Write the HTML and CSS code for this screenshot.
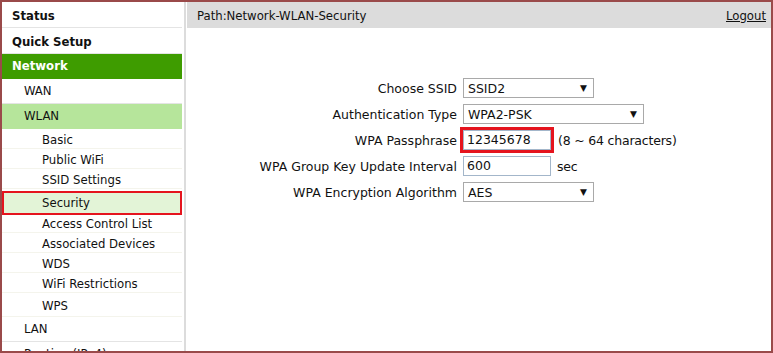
FILE: index.html
```html
<!DOCTYPE html>
<html>
<head>
<meta charset="utf-8">
<link rel="stylesheet" href="styles.css">
</head>
<body>
<div class="frame">
  <nav class="sidebar">
    <div class="item top first">Status</div>
    <div class="item top second">Quick Setup</div>
    <div class="item top active">Network</div>
    <div class="item mid">WAN</div>
    <div class="item mid open">WLAN</div>
    <div class="sub">Basic</div>
    <div class="sub">Public WiFi</div>
    <div class="sub">SSID Settings</div>
    <div class="sub current">Security</div>
    <div class="sub">Access Control List</div>
    <div class="sub">Associated Devices</div>
    <div class="sub">WDS</div>
    <div class="sub">WiFi Restrictions</div>
    <div class="sub last">WPS</div>
    <div class="item mid">LAN</div>
    <div class="item mid">Routing (IPv4)</div>
  </nav>
  <main class="main">
    <header class="pathbar">
      <span class="path">Path:Network-WLAN-Security</span>
      <a class="logout" href="#">Logout</a>
    </header>
    <form class="form">
      <label class="lbl">Choose SSID</label>
      <div class="field"><div class="select w130"><span>SSID2</span><span class="arrow">▼</span></div></div>
      <label class="lbl">Authentication Type</label>
      <div class="field"><div class="select w180"><span>WPA2-PSK</span><span class="arrow">▼</span></div></div>
      <label class="lbl">WPA Passphrase</label>
      <div class="field"><div class="hl"><div class="input">12345678</div></div><span class="hint">(8 ~ 64 characters)</span></div>
      <label class="lbl">WPA Group Key Update Interval</label>
      <div class="field"><div class="input">600</div><span class="hint unit">sec</span></div>
      <label class="lbl">WPA Encryption Algorithm</label>
      <div class="field"><div class="select w130"><span>AES</span><span class="arrow">▼</span></div></div>
    </form>
  </main>
</div>
</body>
</html>
```
FILE: styles.css
```css
* { box-sizing: border-box; }
html, body { margin: 0; padding: 0; background: #fff; }
body {
  font-family: "DejaVu Sans Condensed", "DejaVu Sans", sans-serif;
  font-size: 13px;
  color: #111;
}
.frame {
  width: 773px;
  height: 353px;
  border: 2px solid #9a4a4a;
  display: flex;
  overflow: hidden;
}
.sidebar {
  width: 184px;
  flex: none;
  border-right: 2px solid #dcdcdc;
  background: #fff;
  display: flex;
  flex-direction: column;
}
.item {
  height: 25px;
  line-height: 24px;
  border-bottom: 1px solid #e4e4e4;
  flex: none;
  margin-right: 2px;
}
.item.top { font-weight: bold; padding-left: 10px; color: #111; }
.item.first, .item.second { height: 26px; padding-top: 2px; }
.item.active { background: #3e9c00; color: #fff; border-bottom-color: #3e9c00; }
.item.mid { padding-left: 22px; }
.item.open { background: #b6e59b; border-bottom-color: #b6e59b; }
.sub {
  height: 20px;
  line-height: 21px;
  padding-left: 40px;
  border-bottom: 1px solid #f4f4ec;
  flex: none;
  margin-right: 2px;
}
.sub.current {
  height: 24px;
  line-height: 20px;
  padding-left: 38px;
  background: #e3f4d7;
  border: 2px solid #e5141e;
  margin-top: 2px;
  margin-bottom: -2px;
  position: relative;
  z-index: 1;
}
.sub.last { height: 24px; line-height: 25px; }
.main {
  flex: 1;
  display: flex;
  flex-direction: column;
  margin-left: 1px;
}
.pathbar {
  height: 26px;
  background: #dcdcdc;
  display: flex;
  align-items: center;
  justify-content: space-between;
  padding: 0 5px 0 10px;
}
.logout { color: #111; text-decoration: underline; }
.form {
  margin-top: 50px;
  display: grid;
  grid-template-columns: 270px auto;
  column-gap: 5px;
  row-gap: 6px;
  align-items: center;
  font-family: "DejaVu Sans", sans-serif;
  font-size: 12.5px;
}
.lbl { text-align: right; white-space: nowrap; }
.field { display: flex; align-items: center; height: 20px; white-space: nowrap; }
.select {
  height: 20px;
  border: 1px solid #a9a9a9;
  background: #fff;
  display: flex;
  align-items: center;
  justify-content: space-between;
  padding: 0 6px 0 4px;
  margin-left: 1px;
}
.select .arrow { font-size: 9px; }
.w130 { width: 131px; }
.w180 { width: 181px; }
.input {
  width: 88px;
  height: 20px;
  border: 1px solid #a3b6ca;
  padding: 0 3px;
  line-height: 18px;
  margin-left: 1px;
}
.hl {
  border: 3px solid #e5141e;
  margin: -3px 0 -3px -2px;
}
.hl .input { margin-left: 0; }
.hint { margin-left: 4px; letter-spacing: -0.2px; }
.unit { margin-left: 6px; }
```
